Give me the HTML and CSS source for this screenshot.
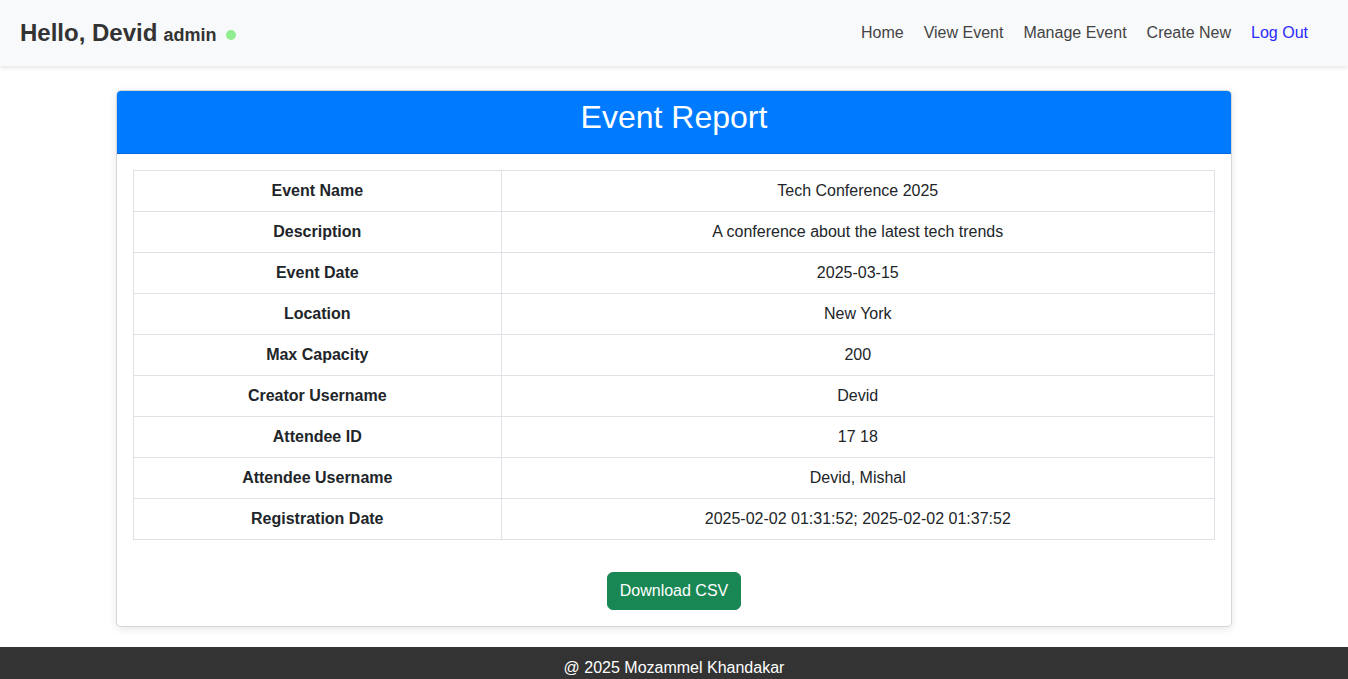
FILE: index.html
```html
<!DOCTYPE html>
<html>
<head>
<meta charset="utf-8">
<link rel="stylesheet" href="styles.css">
</head>
<body>
<nav class="navbar">
  <div class="brand">
    <span class="hello">Hello, Devid</span>
    <span class="role">admin</span>
    <span class="dot"></span>
  </div>
  <ul class="links">
    <li><a href="#">Home</a></li>
    <li><a href="#">View Event</a></li>
    <li><a href="#">Manage Event</a></li>
    <li><a href="#">Create New</a></li>
    <li><a href="#" class="logout">Log Out</a></li>
  </ul>
</nav>
<main class="container">
  <section class="card">
    <header class="card-header"><h1>Event Report</h1></header>
    <div class="card-body">
      <table class="report">
        <tr><th>Event Name</th><td>Tech Conference 2025</td></tr>
        <tr><th>Description</th><td>A conference about the latest tech trends</td></tr>
        <tr><th>Event Date</th><td>2025-03-15</td></tr>
        <tr><th>Location</th><td>New York</td></tr>
        <tr><th>Max Capacity</th><td>200</td></tr>
        <tr><th>Creator Username</th><td>Devid</td></tr>
        <tr><th>Attendee ID</th><td>17 18</td></tr>
        <tr><th>Attendee Username</th><td>Devid, Mishal</td></tr>
        <tr><th>Registration Date</th><td>2025-02-02 01:31:52; 2025-02-02 01:37:52</td></tr>
      </table>
      <div class="actions"><button class="btn">Download CSV</button></div>
    </div>
  </section>
</main>
<footer class="footer">@ 2025 Mozammel Khandakar</footer>
</body>
</html>
```
FILE: styles.css
```css
* { box-sizing: border-box; }
body {
  margin: 0;
  font-family: "Liberation Sans", Arial, sans-serif;
  font-size: 16px;
  line-height: 1.5;
  color: #212529;
  background: #fff;
}
.navbar {
  height: 66px;
  background: #f8f9fa;
  box-shadow: 0 2px 4px rgba(0,0,0,0.1);
  display: flex;
  align-items: center;
  justify-content: space-between;
  padding: 0 40px 0 20px;
  position: relative;
}
.brand { display: flex; align-items: baseline; color: #333; font-weight: bold; }
.hello { font-size: 24px; }
.role { font-size: 18px; margin-left: 6px; }
.dot {
  display: inline-block;
  width: 10px; height: 10px;
  border-radius: 50%;
  background: #90ee90;
  margin-left: 10px;
  align-self: center;
  margin-top: 4px;
}
.links { list-style: none; display: flex; gap: 20px; margin: 0; padding: 0; }
.links a { color: #444; text-decoration: none; font-size: 16px; }
.links a.logout { color: #2a2aff; }
.container { max-width: 1116px; margin: 24px auto 20px; }
.card {
  border: 1px solid #d6d6d6;
  border-radius: 5px;
  box-shadow: 0 2px 8px rgba(0,0,0,0.1);
  overflow: hidden;
  background: #fff;
}
.card-header { background: #007bff; padding: 7px 0 8px; text-align: center; border-bottom: 1px solid #0069d9; }
.card-header h1 { margin: 0 0 9px; font-size: 32px; font-weight: normal; color: #fff; line-height: 38px; }
.card-body { padding: 16px; }
.report { width: 100%; border-collapse: collapse; }
.report th, .report td {
  border: 1px solid #dee2e6;
  padding: 8px;
  text-align: center;
  height: 41px;
}
.report th { width: 34%; font-weight: bold; }
.actions { text-align: center; padding-top: 32px; }
.btn {
  font-family: inherit;
  font-size: 16px;
  line-height: 24px;
  background: #198754;
  color: #fff;
  border: 1px solid #198754;
  border-radius: 6px;
  padding: 6px 12px;
}
.footer {
  background: #333;
  color: #fff;
  text-align: center;
  padding: 9px 0 10px;
  line-height: 24px;
}
```
